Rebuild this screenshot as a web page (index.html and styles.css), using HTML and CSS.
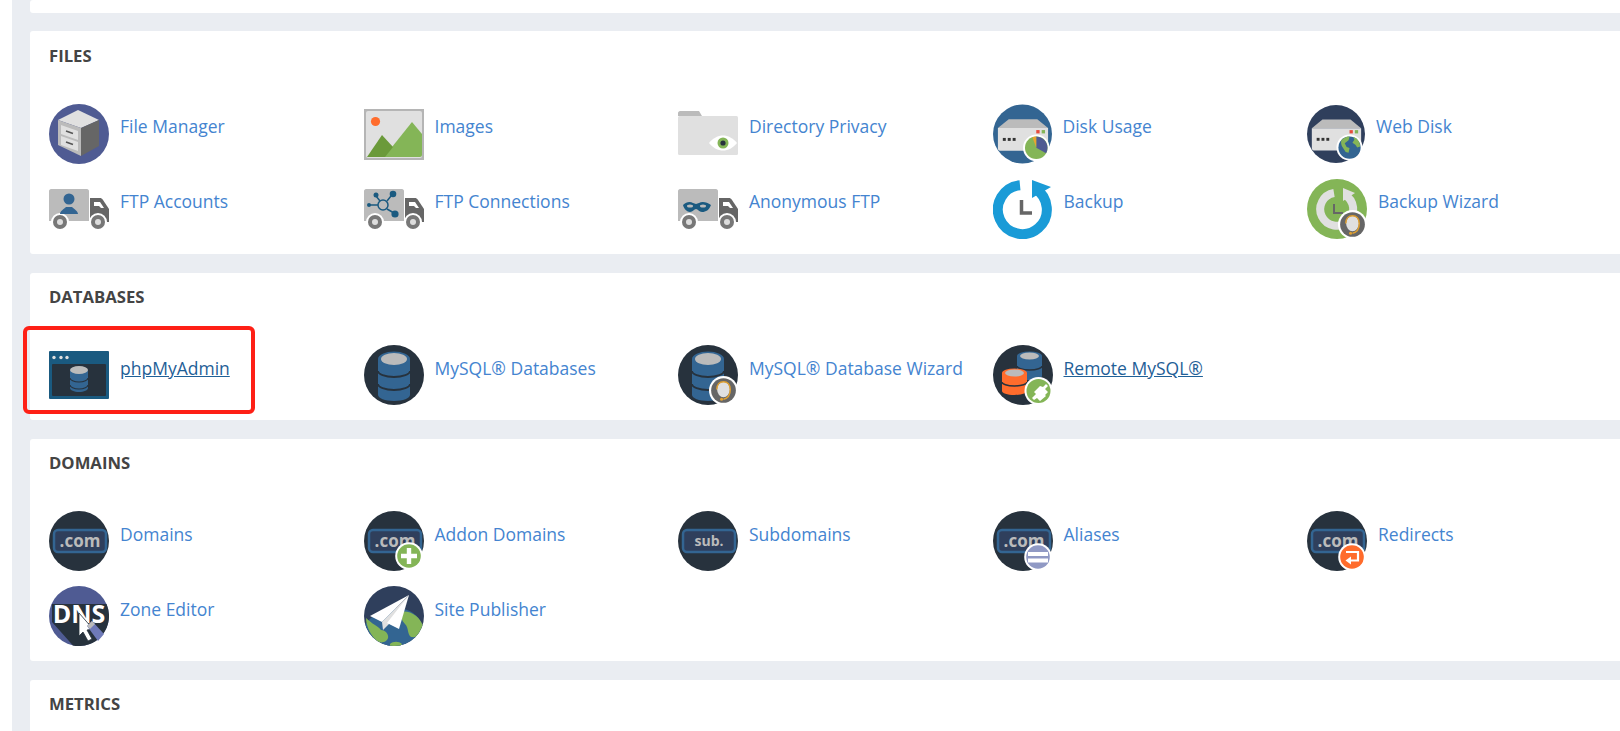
FILE: index.html
```html
<!DOCTYPE html>
<html lang="en">
<head>
<meta charset="utf-8">
<title>cPanel Tools</title>
<link rel="stylesheet" href="styles.css">
</head>
<body>
<svg class="defs" width="0" height="0" aria-hidden="true">
  <defs>
    <clipPath id="disc"><circle cx="30" cy="30" r="30"/></clipPath>
    <symbol id="truck" viewBox="0 0 60 60">
      <path d="M41 19h10c1 0 2 .5 3 2l6 9v13H41z" fill="#666"/>
      <path d="M45 23h6l4 6h-3l-2-2h-5z" fill="#fff"/>
      <path d="M2 10h36c1 0 2 1 2 2v30H0V12c0-1 1-2 2-2z" fill="#bbb"/>
      <circle cx="11" cy="43" r="9" fill="#fff"/><circle cx="11" cy="43" r="7" fill="#777"/><circle cx="11" cy="43" r="3" fill="#ddd"/>
      <circle cx="49" cy="43" r="9" fill="#fff"/><circle cx="49" cy="43" r="7" fill="#777"/><circle cx="49" cy="43" r="3" fill="#ddd"/>
    </symbol>
    <symbol id="server" viewBox="0 0 60 60">
      <path d="M16 15h29l11 9H5z" fill="#bbb"/>
      <path d="M5 24h51v21c0 1-1 2-2 2H7c-1 0-2-1-2-2z" fill="#e0e0e0"/>
      <rect x="44" y="26" width="3.400" height="3.400" fill="#e74c3c"/><rect x="49.500" y="26" width="3.400" height="3.400" fill="#84b557"/>
      <rect x="10" y="34" width="3" height="3" fill="#333"/><rect x="15" y="34" width="3" height="3" fill="#333"/><rect x="20" y="34" width="3" height="3" fill="#333"/>
    </symbol>
    <symbol id="com" viewBox="0 0 60 60">
      <circle cx="30" cy="30" r="30" fill="#27323d"/>
      <rect x="5" y="19" width="52" height="22" rx="4" fill="#2f3f5c" stroke="#336592" stroke-width="2.500"/>
    </symbol>
    <symbol id="db" viewBox="0 0 60 60">
      <circle cx="30" cy="30" r="30" fill="#27323d"/>
      <path d="M14 14v36c0 3 7 6 16 6s16-3 16-6V14z" fill="#336592"/>
      <ellipse cx="30" cy="14" rx="16" ry="7.500" fill="#336592"/>
      <ellipse cx="30" cy="14" rx="13" ry="6" fill="#bbb"/>
      <path d="M14 26c0 3 7 6 16 6s16-3 16-6M14 39c0 3 7 6 16 6s16-3 16-6" fill="none" stroke="#27323d" stroke-width="1.800"/>
    </symbol>
    <symbol id="headset" viewBox="0 0 30 30">
      <circle cx="15" cy="15" r="15" fill="#fff"/>
      <circle cx="15" cy="15" r="12.800" fill="#666"/>
      <ellipse cx="15" cy="14" rx="6.600" ry="8" fill="#e0e0e0"/>
      <path d="M8 14c0-5 3-8 7-8s7 3 7 8c0 6-2 9-7 10" fill="none" stroke="#e0a030" stroke-width="1.500"/>
      <circle cx="13" cy="24" r="1.600" fill="#e0a030"/>
    </symbol>
  </defs>
</svg>

<main class="page">
  <section class="panel panel-stub"></section>

  <section class="panel panel-first">
    <h2 class="title">FILES</h2>
    <div class="grid">
      <a class="item">
        <svg class="icon" viewBox="0 0 60 60"><circle cx="30" cy="30" r="30" fill="#4f5b93"/><path d="M9 16 29 6l21 10-18 8z" fill="#e0e0e0"/><path d="M32 24l18-8v26l-18 10z" fill="#666"/><path d="M9 16l23 8v28L9 41z" fill="#bbb"/><path d="M12 21l17 6v9l-17-6zM12 32l17 6v9l-17-6z" fill="#e0e0e0"/><path d="M17 27l7 2.500M17 38l7 2.500" stroke="#555" stroke-width="1.600"/></svg>
        <span class="label">File Manager</span>
      </a>
      <a class="item">
        <svg class="icon" viewBox="0 0 60 60"><rect y="5" width="60" height="51" fill="#b5b5b5"/><rect x="2" y="7" width="56" height="47" rx="2" fill="#e0e0e0"/><circle cx="11.500" cy="17.500" r="4.600" fill="#ff6c2c"/><path d="M20 53l28-35 10 12v21c0 1-1 2-2 2z" fill="#84b557"/><path d="M3 53l15-22 11 12-8 10z" fill="#6b9a3a"/></svg>
        <span class="label">Images</span>
      </a>
      <a class="item">
        <svg class="icon" viewBox="0 0 60 60"><path d="M0 12V9c0-1 1-2 2-2h19l3 5z" fill="#bbb"/><rect y="12" width="60" height="39" rx="1.500" fill="#e0e0e0"/><path d="M31 39c4-5 9-7.500 14-7.500S55 34 59 39c-4 5-9 7.500-14 7.500S35 44 31 39z" fill="#fff"/><circle cx="45" cy="39" r="5.500" fill="#84b557"/><circle cx="45" cy="39" r="2.600" fill="#27323d"/></svg>
        <span class="label">Directory Privacy</span>
      </a>
      <a class="item">
        <svg class="icon icon-narrow" viewBox="0 0 60 60"><circle cx="30" cy="30" r="30" fill="#336592"/><use href="#server" width="60" height="60"/><circle cx="44" cy="44" r="13.500" fill="#fff"/><circle cx="44" cy="44" r="11.500" fill="#84b557"/><path d="M44 44V32.500a11.500 11.500 0 0 1 10 17z" fill="#4f5b93"/><path d="M44 44V32.500a11.500 11.500 0 0 0-4 .7z" fill="#e8a530"/></svg>
        <span class="label">Disk Usage</span>
      </a>
      <a class="item">
        <svg class="icon icon-slim" viewBox="0 0 60 60"><circle cx="30" cy="30" r="30" fill="#2f3f5c"/><use href="#server" width="60" height="60"/><circle cx="44" cy="44" r="13.500" fill="#fff"/><circle cx="44" cy="44" r="11.500" fill="#336592"/><path d="M36 36c3-3 6-3.500 8-3.500l-1 4-4 3 2 4 3 1-1 5-3-1-4-6c-1-3-1-5 0-7zM48 33c4 1 7 5 7 10l-3 1-2-3-3-2 2-3z" fill="#84b557"/></svg>
        <span class="label">Web Disk</span>
      </a>
      <a class="item">
        <svg class="icon" viewBox="0 0 60 60"><use href="#truck" width="60" height="60"/><circle cx="20" cy="20" r="5.500" fill="#336592"/><path d="M11 35c0-3 4-5 6-7h6c2 2 6 4 6 7z" fill="#336592"/></svg>
        <span class="label">FTP Accounts</span>
      </a>
      <a class="item">
        <svg class="icon" viewBox="0 0 60 60"><use href="#truck" width="60" height="60"/><g stroke="#1a5a80" stroke-width="1.500" fill="none"><circle cx="19" cy="26" r="5"/><path d="M14 26H5M16 22l-4-5M23 22l4-5M23 30l7 4"/></g><g fill="#1a5a80"><circle cx="5" cy="26" r="2"/><circle cx="12" cy="16" r="2.500"/><circle cx="29" cy="15" r="3.300"/><circle cx="31" cy="35" r="3.600"/></g></svg>
        <span class="label">FTP Connections</span>
      </a>
      <a class="item">
        <svg class="icon" viewBox="0 0 60 60"><use href="#truck" width="60" height="60"/><path d="M5 26c3-3 7-4 10-2l3 1 3-1c3-2 8-1 12 2-2 5-5 7-9 7-3 0-4-3-6-3s-3 3-6 3c-3 0-6-3-7-7z" fill="#1a5a80"/><ellipse cx="12" cy="27" rx="3" ry="1.500" fill="#bbb"/><ellipse cx="25" cy="27" rx="3" ry="1.500" fill="#bbb"/></svg>
        <span class="label">Anonymous FTP</span>
      </a>
      <a class="item">
        <svg class="icon" viewBox="0 0 60 60"><path d="M27 6.200A24.500 24.500 0 1 0 42 9.600" fill="none" stroke="#1a9bd7" stroke-width="10"/><path d="M39 1l19 7-19 11z" fill="#1a9bd7"/><path d="M28.500 21v13H39" fill="none" stroke="#666" stroke-width="3.500"/></svg>
        <span class="label">Backup</span>
      </a>
      <a class="item">
        <svg class="icon" viewBox="0 0 60 60"><circle cx="30" cy="30" r="30" fill="#84b557"/><path d="M27 14A16.500 16.500 0 1 0 38 16" fill="none" stroke="#e0e0e0" stroke-width="8"/><path d="M36 9l12 5-12 8z" fill="#e0e0e0"/><path d="M27 25v9h9" fill="none" stroke="#666" stroke-width="2"/><use href="#headset" x="31" y="31" width="29" height="29"/></svg>
        <span class="label">Backup Wizard</span>
      </a>
    </div>
  </section>

  <section class="panel">
    <h2 class="title">DATABASES</h2>
    <div class="grid grid-db">
      <a class="item item-active">
        <svg class="icon" viewBox="0 0 60 60"><rect y="6" width="60" height="48" rx="1" fill="#1a5a80"/><rect x="3" y="19" width="54" height="32" rx="1" fill="#27323d"/><circle cx="5" cy="12.500" r="1.700" fill="#e0e0e0"/><circle cx="12" cy="12.500" r="1.700" fill="#e0e0e0"/><circle cx="18" cy="12.500" r="1.700" fill="#e0e0e0"/><path d="M21 25v18c0 2 4 4 9 4s9-2 9-4V25z" fill="#336592"/><ellipse cx="30" cy="25" rx="9" ry="4" fill="#bbb"/><path d="M21 33c0 2 4 4 9 4s9-2 9-4M21 40c0 2 4 4 9 4s9-2 9-4" fill="none" stroke="#27323d" stroke-width="1.200"/></svg>
        <span class="label">phpMyAdmin</span>
        <span class="callout"></span>
      </a>
      <a class="item">
        <svg class="icon" viewBox="0 0 60 60"><use href="#db" width="60" height="60"/></svg>
        <span class="label">MySQL® Databases</span>
      </a>
      <a class="item">
        <svg class="icon" viewBox="0 0 60 60"><use href="#db" width="60" height="60"/><use href="#headset" x="31" y="31" width="29" height="29"/></svg>
        <span class="label">MySQL® Database Wizard</span>
      </a>
      <a class="item item-active">
        <svg class="icon" viewBox="0 0 60 60"><circle cx="30" cy="30" r="30" fill="#27323d"/><path d="M24 11v20c0 2 5 4 12.500 4S49 33 49 31V11z" fill="#336592"/><ellipse cx="36.500" cy="11" rx="12.500" ry="4.500" fill="#336592"/><ellipse cx="36.500" cy="11" rx="9.500" ry="3.500" fill="#bbb"/><path d="M24 21c0 2 5 4 12.500 4S49 23 49 21" fill="none" stroke="#27323d" stroke-width="1.500"/><path d="M9 28v18c0 2 5 4 12.500 4S34 48 34 46V28z" fill="#ff6c2c"/><ellipse cx="21.500" cy="28" rx="12.500" ry="4.500" fill="#ff6c2c"/><ellipse cx="21.500" cy="28" rx="9.500" ry="3.500" fill="#bbb"/><path d="M9 37c0 2 5 4 12.500 4S34 39 34 37" fill="none" stroke="#27323d" stroke-width="1.500"/><circle cx="45.500" cy="46" r="14" fill="#fff"/><circle cx="45.500" cy="46" r="12" fill="#84b557"/><path d="M39 53l4-4-2-2 6-6 3 1 3-3 2 2-3 3 3 3-3 3 1 1-6 5-3-3-3 2z" fill="#fff"/></svg>
        <span class="label">Remote MySQL®</span>
      </a>
    </div>
  </section>

  <section class="panel">
    <h2 class="title">DOMAINS</h2>
    <div class="grid grid-dom">
      <a class="item">
        <svg class="icon" viewBox="0 0 60 60"><use href="#com" width="60" height="60"/><text class="svg-com" x="31" y="36" text-anchor="middle">.com</text></svg>
        <span class="label">Domains</span>
      </a>
      <a class="item">
        <svg class="icon" viewBox="0 0 60 60"><use href="#com" width="60" height="60"/><text class="svg-com" x="31" y="36" text-anchor="middle">.com</text><circle cx="45" cy="45" r="13.800" fill="#fff"/><circle cx="45" cy="45" r="11.800" fill="#84b557"/><path d="M42.800 37h4.400v5.800H53v4.400h-5.800V53h-4.400v-5.800H37v-4.400h5.800z" fill="#fff"/></svg>
        <span class="label">Addon Domains</span>
      </a>
      <a class="item">
        <svg class="icon" viewBox="0 0 60 60"><use href="#com" width="60" height="60"/><text class="svg-sub" x="31" y="35" text-anchor="middle">sub.</text></svg>
        <span class="label">Subdomains</span>
      </a>
      <a class="item">
        <svg class="icon" viewBox="0 0 60 60"><use href="#com" width="60" height="60"/><text class="svg-com" x="31" y="36" text-anchor="middle">.com</text><circle cx="45" cy="46" r="13.800" fill="#fff"/><circle cx="45" cy="46" r="11.800" fill="#9099c4"/><path d="M35 41h20v4H35zM35 47.500h20v4H35z" fill="#fff"/></svg>
        <span class="label">Aliases</span>
      </a>
      <a class="item">
        <svg class="icon" viewBox="0 0 60 60"><use href="#com" width="60" height="60"/><text class="svg-com" x="31" y="36" text-anchor="middle">.com</text><circle cx="45" cy="46" r="13.800" fill="#fff"/><circle cx="45" cy="46" r="11.800" fill="#ff6c2c"/><path d="M39 41h12v8.500h-8" fill="none" stroke="#fff" stroke-width="2.200"/><path d="M44 45.500v8l-5.500-4z" fill="#fff"/></svg>
        <span class="label">Redirects</span>
      </a>
      <a class="item">
        <svg class="icon" viewBox="0 0 60 60"><circle cx="30" cy="30" r="30" fill="#4f5b93"/><path d="M3 18h54.500A30 30 0 0 1 24 59.400L3 36z" fill="#27323d"/><text class="svg-dns" x="30" y="36.500" text-anchor="middle">DNS</text><path d="M30 27l14 16-6 1 5 9-4 2-5-9-4 4z" fill="#fff" stroke="#27323d" stroke-width=".8"/><path d="M38 40l5-5 12 13-6 7z" fill="#6f7ab8"/><path d="M38 40l5-5 3 3-5 5z" fill="#bbb"/></svg>
        <span class="label">Zone Editor</span>
      </a>
      <a class="item">
        <svg class="icon" viewBox="0 0 60 60"><circle cx="30" cy="30" r="30" fill="#2f3f5c"/><g clip-path="url(#disc)"><path d="M0 40C8 28 20 22 32 22s24 6 28 22v16H0z" fill="#336592"/><path d="M2 32c6 6 12 8 15 12 4 0 8 4 7 8s-7 6-11 3c-5-4-11-14-11-23zM36 26c10-2 20 4 24 16-2 6-6 10-13 9-4-3-2-9-6-13-3-3-5-8-5-12zM26 58c3-3 9-3 12 0l-2 3H26z" fill="#84b557"/></g><path d="M45 9L6 30l12 6z" fill="#fff"/><path d="M45 9L18 36l1 8 6-6z" fill="#e0e0e0"/><path d="M45 9L23 37l12 6z" fill="#fff"/></svg>
        <span class="label">Site Publisher</span>
      </a>
    </div>
  </section>

  <section class="panel panel-last">
    <h2 class="title">METRICS</h2>
  </section>
</main>
</body>
</html>
```

FILE: styles.css
```css
* { box-sizing: border-box; }
html, body { margin: 0; height: 731px; overflow: hidden; background: #fff; }
body { font-family: "Open Sans", "Liberation Sans", sans-serif; }
.defs { position: absolute; }

.page {
  margin-left: 12px;
  padding-left: 18px;
  height: 731px;
  overflow: hidden;
  background: #eaedf2;
}

.panel {
  background: #fff;
  border-radius: 3px 0 0 3px;
  padding: 14px 0 0 19px;
  margin-bottom: 19px;
}
.panel-stub { height: 13px; padding: 0; margin-bottom: 18px; }
.panel-first { padding-top: 15px; }
.panel-last { height: 60px; margin-bottom: 0; }

.title {
  margin: 0 0 38px;
  font-size: 16.700px;
  line-height: 20px;
  font-weight: 700;
  color: #444;
}

.grid {
  display: grid;
  grid-template-columns: repeat(5, 314.500px);
  row-gap: 15px;
  padding-bottom: 15px;
}

.item {
  position: relative;
  display: flex;
  align-items: flex-start;
  gap: 11px;
  height: 60px;
  color: #4484d0;
}
.item-active { color: #1f6097; }
.item-active .label { text-decoration: underline; }

.icon { flex: none; width: 60px; height: 60px; display: block; }
.icon-narrow { width: 59px; }
.icon-slim { width: 58px; }

.label {
  font-size: 17.500px;
  line-height: 24px;
  margin-top: 10px;
  white-space: nowrap;
}
.grid-db .label { margin-top: 11px; }
.grid-dom .label { margin-top: 11px; }

.callout {
  position: absolute;
  left: -26px;
  top: -19px;
  width: 232px;
  height: 88px;
  border: 4px solid #fe2016;
  border-radius: 6px;
}

.svg-com { font: 700 17px "Open Sans", sans-serif; fill: #bbb; }
.svg-sub { font: 700 14px "Open Sans", sans-serif; fill: #bbb; }
.svg-dns { font: 700 25px "Open Sans", sans-serif; fill: #fff; }
```
